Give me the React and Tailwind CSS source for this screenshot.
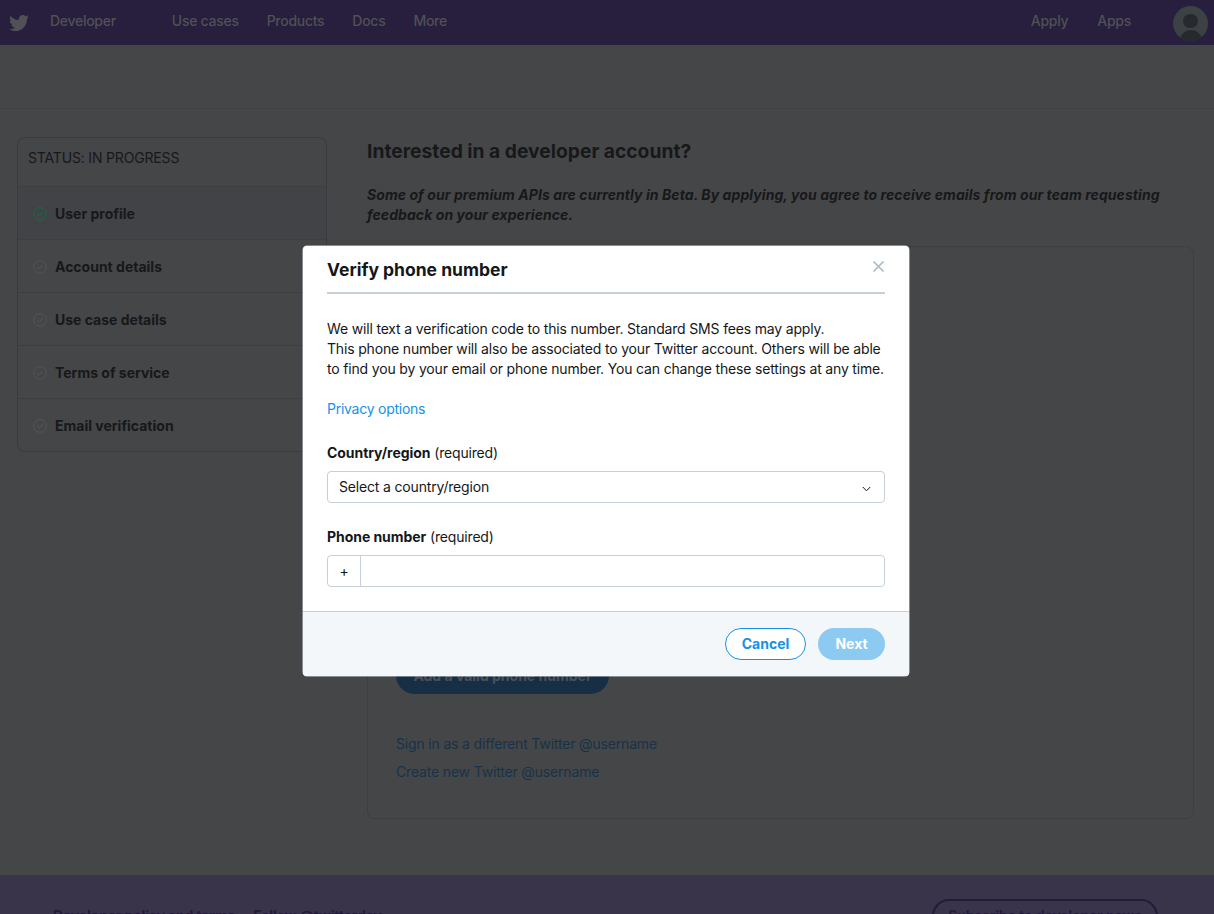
import React from "react";
import { FaTwitter } from "react-icons/fa";

function Check({ color }) {
  return (
    <svg width="14" height="14" viewBox="0 0 14 14" fill="none" stroke={color} strokeWidth="1" className="mb-[1px] shrink-0">
      <circle cx="7" cy="7" r="6.3" />
      <path d="M4.3 7.2 L6.2 9.1 L9.7 5" />
    </svg>
  );
}

const steps = [
  ["User profile", "#1c6a48"],
  ["Account details", "#53565a"],
  ["Use case details", "#53565a"],
  ["Terms of service", "#53565a"],
  ["Email verification", "#53565a"],
];

export default function App() {
  return (
    <div className="relative h-[914px] w-[1214px] overflow-hidden bg-[#454648] text-sm tracking-[-0.17px] text-[#17181a] font-['Inter','Liberation_Sans',sans-serif]">
      <header className="flex h-[45px] items-center bg-[#271f3d] font-medium tracking-[-0.28px] text-[#505055]">
        <FaTwitter className="ml-[9px] text-[20px]" />
        <span className="mb-1 ml-[21px]">Developer</span>
        <nav className="mb-1 ml-[56px] flex gap-7">
          <span>Use cases</span>
          <span>Products</span>
          <span>Docs</span>
          <span>More</span>
        </nav>
        <div className="ml-auto flex items-center">
          <span className="mb-1">Apply</span>
          <span className="mb-1 ml-[29px]">Apps</span>
          <div className="relative ml-[42px] mr-[6px] mt-[1px] h-[35px] w-[35px] overflow-hidden rounded-full bg-[#3c4144]">
            <div className="absolute left-[10px] top-[8px] h-[14px] w-[15px] rounded-full bg-[#262a2e]" />
            <div className="absolute left-[7px] top-[24px] h-[22px] w-[22px] rounded-full bg-[#262a2e]" />
          </div>
        </div>
      </header>

      <div className="h-[64px] border-b border-[#3f4042]" />

      <main className="flex h-[766px] items-start pl-[17px] pr-5 pt-[28px]">
        <aside className="w-[310px] overflow-hidden rounded-lg border border-[#3a3b3e] bg-[#454648]">
          <div className="h-[49px] border-b border-[#3d3e41] pl-[10px] pt-[10px] leading-5">STATUS: IN PROGRESS</div>
          {steps.map(([label, color], i) => (
            <div key={label} className={`flex items-center gap-2 pl-[15px] pt-[2px] font-bold tracking-normal ${i < 4 ? "h-[53px] border-b border-[#3d3e41]" : "h-[52px]"} ${i === 0 ? "bg-[#414347]" : ""}`}>
              <Check color={color} />
              <span>{label}</span>
            </div>
          ))}
        </aside>

        <section className="ml-[40px] w-[827px]">
          <h1 className="text-[19.25px] leading-7 font-bold tracking-normal">Interested in a developer account?</h1>
          <p className="mt-[20px] leading-5 font-bold tracking-[0.07px] italic">
            Some of our premium APIs are currently in Beta. By applying, you agree to receive emails from our team requesting feedback on your experience.
          </p>
          <div className="mt-[21px] h-[573px] rounded-lg border border-[#3d3e41] pl-[28px] pt-[410px]">
            <button className="h-[37px] w-[213px] rounded-full bg-[#162f45] font-bold tracking-normal text-[#4a5158]">Add a valid phone number</button>
            <div className="mt-[40px] leading-5 text-[#183349]">Sign in as a different Twitter @username</div>
            <div className="mt-2 leading-5 text-[#183349]">Create new Twitter @username</div>
          </div>
        </section>
      </main>

      <footer className="flex h-[39px] items-start bg-[#39344a] pl-[53px] font-bold text-[#231a3c]">
        <span className="mt-[31px]">Developer policy and terms</span>
        <span className="ml-[18px] mt-[31px]">Follow @twitterdev</span>
        <span className="ml-auto mr-[56px] mt-[24px] w-[226px] rounded-full border-2 border-[#231a3c] py-[5px] text-center font-semibold tracking-[-0.1px]">Subscribe to developer news</span>
      </footer>

      <div className="absolute left-[303px] top-[246px] w-[606px] overflow-hidden rounded-[4px] bg-white text-[#14171a] shadow-[0_0_0_0.5px_#c5d0da]">
        <div className="relative mx-6 h-[48px] border-b-2 border-[#c5d0da]">
          <h2 className="pt-[12px] text-[17.5px] leading-6 font-bold tracking-normal">Verify phone number</h2>
          <svg className="absolute right-0 top-[14px]" width="13" height="13" viewBox="0 0 13 13" fill="none" stroke="#aab8c2" strokeWidth="1.6">
            <path d="M1.5 1.5 L11.5 11.5 M11.5 1.5 L1.5 11.5" />
          </svg>
        </div>
        <div className="px-6 pt-[25px]">
          <p className="leading-5 whitespace-nowrap">
            We will text a verification code to this number. Standard SMS fees may apply.<br />
            This phone number will also be associated to your Twitter account. Others will be able<br />
            to find you by your email or phone number. You can change these settings at any time.
          </p>
          <div className="mt-5 leading-5 tracking-[-0.25px] text-[#1592e6]">Privacy options</div>
          <div className="mt-6 leading-5"><b className="font-bold tracking-[-0.05px]">Country/region</b> (required)</div>
          <div className="mt-2 flex h-8 items-center justify-between rounded-[4px] border border-[#c5d0da] pl-[11px] pr-[13px]">
            <span>Select a country/region</span>
            <svg className="mt-[3px]" width="9" height="6" viewBox="0 0 9 6" fill="none" stroke="#14171a" strokeWidth="1"><path d="M0.8 1 L4.5 4.8 L8.2 1" /></svg>
          </div>
          <div className="mt-[24px] leading-5"><b className="font-bold tracking-[-0.05px]">Phone number</b> (required)</div>
          <div className="mt-2 flex h-8 rounded-[4px] border border-[#c5d0da]">
            <span className="flex w-[33px] items-center justify-center border-r border-[#c5d0da]">+</span>
          </div>
        </div>
        <div className="mt-6 flex h-[65px] items-center justify-end gap-3 border-t border-[#c5d0da] bg-[#f3f7fa] pr-6 tracking-normal">
          <button className="h-8 w-[81px] rounded-full border border-[#1592e6] bg-white font-bold text-[#1592e6]">Cancel</button>
          <button className="h-8 w-[67px] rounded-full bg-[#8dcaf2] font-bold text-white">Next</button>
        </div>
      </div>
    </div>
  );
}
